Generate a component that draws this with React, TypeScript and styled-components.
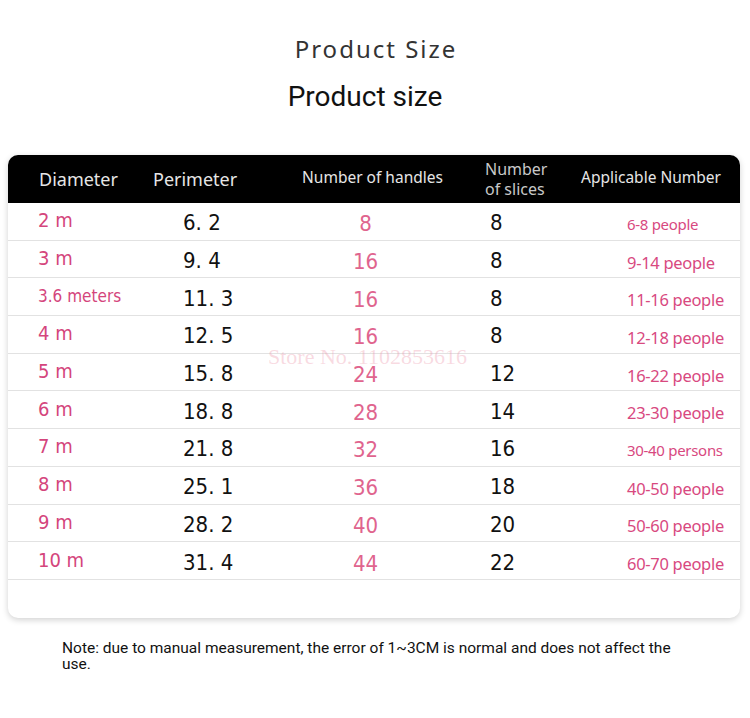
import React from 'react';
import styled, {createGlobalStyle} from 'styled-components';

type Row = {
  diameter: string;
  perimeter: string;
  handles: string;
  slices: string;
  people: string;
  small?: boolean;
};

const rows: Row[] = [
  {diameter: '2 m', perimeter: '6. 2', handles: '8', slices: '8', people: '6-8 people', small: true},
  {diameter: '3 m', perimeter: '9. 4', handles: '16', slices: '8', people: '9-14 people'},
  {diameter: '3.6 meters', perimeter: '11. 3', handles: '16', slices: '8', people: '11-16 people'},
  {diameter: '4 m', perimeter: '12. 5', handles: '16', slices: '8', people: '12-18 people'},
  {diameter: '5 m', perimeter: '15. 8', handles: '24', slices: '12', people: '16-22 people'},
  {diameter: '6 m', perimeter: '18. 8', handles: '28', slices: '14', people: '23-30 people'},
  {diameter: '7 m', perimeter: '21. 8', handles: '32', slices: '16', people: '30-40 persons', small: true},
  {diameter: '8 m', perimeter: '25. 1', handles: '36', slices: '18', people: '40-50 people'},
  {diameter: '9 m', perimeter: '28. 2', handles: '40', slices: '20', people: '50-60 people'},
  {diameter: '10 m', perimeter: '31. 4', handles: '44', slices: '22', people: '60-70 people'},
];

const GlobalStyle = createGlobalStyle`
  html, body {
    margin: 0;
    padding: 0;
    background: #ffffff;
  }
  body {
    font-family: "Noto Sans", "Liberation Sans", sans-serif;
  }
`;

export default function App() {
  return (
    <>
      <GlobalStyle />
      <Page>
        <Titles>
          <Title>Product Size</Title>
          <SubTitle>Product size</SubTitle>
        </Titles>

        <Card>
          <HeadRow>
            <HeadCell $pad="0 0 0 31px">Diameter</HeadCell>
            <HeadCell $pad="0 0 0 8px">Perimeter</HeadCell>
            <HeadCell $pad="0" $center $small>Number of handles</HeadCell>
            <HeadCell $pad="0 0 0 25px" $stack>Number<br />of slices</HeadCell>
            <HeadCell $pad="0 0 0 11px" $small>Applicable Number</HeadCell>
          </HeadRow>

          {rows.map((r) => (
            <BodyRow key={r.diameter}>
              <Diameter $small={r.diameter.length > 5}>{r.diameter}</Diameter>
              <Perimeter>{r.perimeter}</Perimeter>
              <Handles>{r.handles}</Handles>
              <Slices>{r.slices}</Slices>
              <People $small={r.small}>{r.people}</People>
            </BodyRow>
          ))}
          <Filler />

          <Watermark>Store No. 1102853616</Watermark>
        </Card>

        <Note>
          Note: due to manual measurement, the error of 1~3CM is normal and does not affect the use.
        </Note>
      </Page>
    </>
  );
}

const Page = styled.div`
  width: 750px;
  height: 718px;
  box-sizing: border-box;
  padding: 30px 10px 0 8px;
  overflow: hidden;
`;

const Titles = styled.div`
  display: flex;
  flex-direction: column;
  align-items: center;
`;

const Title = styled.div`
  font-family: "Noto Sans", sans-serif;
  font-size: 24px;
  line-height: 38px;
  letter-spacing: 2px;
  color: #333333;
  margin-left: 4px;
`;

const SubTitle = styled.div`
  font-family: Roboto, sans-serif;
  font-size: 28px;
  line-height: 38px;
  color: #111111;
  margin: 10px 0 0 -18px;
`;

const Card = styled.div`
  position: relative;
  margin-top: 39px;
  width: 732px;
  border-radius: 10px;
  background: #ffffff;
  box-shadow: 0 2px 6px rgba(0, 0, 0, 0.18);
  overflow: hidden;
`;

const Grid = styled.div`
  display: grid;
  grid-template-columns: 137px 140px 175px 110px 1fr;
  align-items: center;
`;

const HeadRow = styled(Grid)`
  height: 48px;
  background: #000000;
`;

const HeadCell = styled.div<{$pad: string; $center?: boolean; $small?: boolean; $stack?: boolean}>`
  padding: ${(p) => p.$pad};
  text-align: ${(p) => (p.$center ? 'center' : 'left')};
  font-family: "Noto Sans", sans-serif;
  font-size: ${(p) => (p.$small ? '15.5px' : p.$stack ? '16px' : '18px')};
  line-height: ${(p) => (p.$stack ? '20px' : '22px')};
  margin-top: ${(p) => (p.$small ? '-4px' : '0')};
  color: ${(p) => (p.$stack ? '#c8c8c8' : '#e6e6e6')};
  white-space: nowrap;
`;

const BodyRow = styled(Grid)`
  height: 37.7px;
  border-bottom: 1px solid #e2e2e2;
  box-sizing: border-box;
`;

const Filler = styled.div`
  height: 38px;
`;

const Narrow = styled.div`
  font-family: "Liberation Sans Narrow", "DejaVu Sans Condensed", "Roboto Condensed", Roboto, sans-serif;
  font-size: 22px;
  line-height: 24px;
  white-space: nowrap;
`;

const Diameter = styled(Narrow)<{$small?: boolean}>`
  padding-left: 30px;
  margin-top: -2px;
  font-size: ${(p) => (p.$small ? '17px' : '20px')};
  color: #d4457c;
`;

const Perimeter = styled(Narrow)`
  padding-left: 38px;
  margin-top: 4px;
  color: #111111;
`;

const Handles = styled(Narrow)`
  text-align: center;
  padding-right: 14px;
  margin-top: 6px;
  color: #e0648e;
`;

const Slices = styled(Narrow)`
  padding-left: 30px;
  margin-top: 4px;
  color: #111111;
`;

const People = styled.div<{$small?: boolean}>`
  padding-left: 57px;
  margin-top: 6px;
  font-family: "Noto Sans", sans-serif;
  font-size: ${(p) => (p.$small ? '15px' : '16.5px')};
  letter-spacing: -0.3px;
  color: #d8497f;
  white-space: nowrap;
`;

const Watermark = styled.div`
  position: absolute;
  left: 260px;
  top: 193px;
  font-family: "Liberation Serif", serif;
  font-size: 22px;
  line-height: 18px;
  color: rgba(236, 150, 170, 0.35);
  pointer-events: none;
`;

const Note = styled.div`
  margin: 22px 0 0 54px;
  width: 640px;
  font-family: Roboto, sans-serif;
  font-size: 15.5px;
  line-height: 16px;
  color: #111111;
`;
